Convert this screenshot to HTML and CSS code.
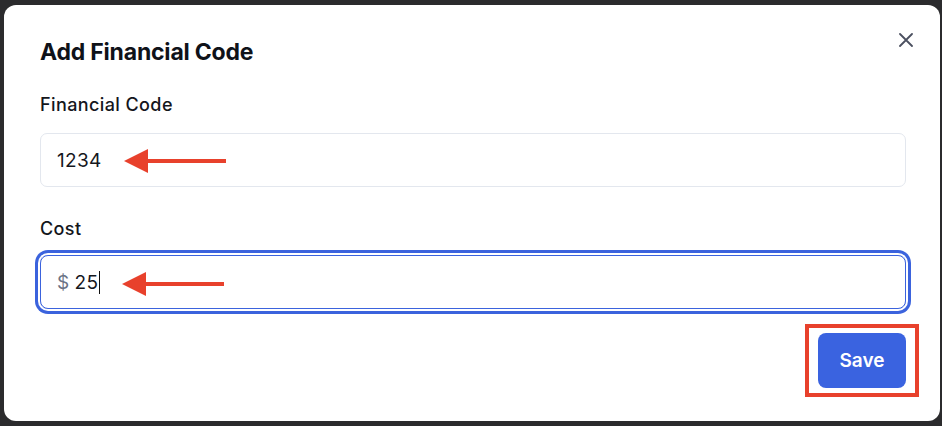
FILE: index.html
```html
<!DOCTYPE html>
<html lang="en">
<head>
<meta charset="utf-8">
<title>Add Financial Code</title>
<link rel="stylesheet" href="styles.css">
</head>
<body>
<div class="modal">
  <div class="header">
    <h2 class="title">Add Financial Code</h2>
    <button class="close" aria-label="Close">
      <svg width="14" height="14" viewBox="0 0 14 14"><path d="M1 1 L13 13 M13 1 L1 13" stroke="#4b5060" stroke-width="1.8" stroke-linecap="round" fill="none"/></svg>
    </button>
  </div>
  <label class="label label-first">Financial Code</label>
  <div class="input">
    <span class="value">1234</span>
    <svg class="arrow arrow-1" width="104" height="26" viewBox="0 0 104 26"><polygon points="0,13 24,1 24,25" fill="#e8412c"/><line x1="20" y1="13" x2="102" y2="13" stroke="#e8412c" stroke-width="4"/></svg>
  </div>
  <label class="label label-second">Cost</label>
  <div class="input input-focus">
    <span class="prefix">$</span><span class="value">25</span><span class="caret"></span>
    <svg class="arrow arrow-2" width="104" height="26" viewBox="0 0 104 26"><polygon points="0,13 24,1 24,25" fill="#e8412c"/><line x1="20" y1="13" x2="102" y2="13" stroke="#e8412c" stroke-width="4"/></svg>
  </div>
  <div class="footer">
    <button class="save">Save<span class="highlight"></span></button>
  </div>
</div>
</body>
</html>
```
FILE: styles.css
```css
html, body {
  margin: 0;
  padding: 0;
  background: #2b2b2d;
}
body {
  font-family: Inter, "Liberation Sans", Arial, sans-serif;
  color: #111318;
  width: 942px;
  height: 426px;
  overflow: hidden;
}
.modal {
  box-sizing: border-box;
  margin: 5px 2px 5px 4px;
  height: 416px;
  background: #fff;
  border-radius: 12px;
  padding: 33px 34px 0 36px;
  display: flex;
  flex-direction: column;
}
.header {
  display: flex;
  justify-content: space-between;
  align-items: flex-start;
  height: 28px;
}
.title {
  margin: 0;
  font-size: 23px;
  line-height: 28px;
  font-weight: 700;
  letter-spacing: -0.2px;
  color: #0f1219;
}
.close {
  border: 0;
  background: none;
  padding: 0;
  margin: -5px -7px 0 0;
  width: 14px;
  height: 14px;
  display: flex;
}
.label {
  display: block;
  font-size: 18px;
  line-height: 24px;
  font-weight: 500;
  letter-spacing: 0.4px;
  color: #14161c;
}
.label-first { margin-top: 27px; }
.label-second { margin-top: 30px; }
.input {
  position: relative;
  box-sizing: border-box;
  height: 54px;
  margin-top: 16px;
  border: 1px solid #e3e7ee;
  border-radius: 7px;
  padding: 0 16px;
  display: flex;
  align-items: center;
  font-size: 19px;
  letter-spacing: 0.3px;
  color: #15171d;
}
.input-focus {
  margin-top: 14px;
  border-color: #3b63dd;
  box-shadow: 0 0 0 2px #fff, 0 0 0 5px #3b63dd;
  border-radius: 8px;
}
.prefix {
  color: #6b7385;
  margin-right: 5px;
}
.caret {
  display: inline-block;
  width: 1px;
  height: 23px;
  background: #111;
  margin-left: 1px;
}
.arrow {
  position: absolute;
}
.arrow-1 { left: 83px; top: 14px; }
.arrow-2 { left: 81px; top: 15px; }
.footer {
  display: flex;
  justify-content: flex-end;
  margin-top: 24px;
}
.save {
  position: relative;
  width: 88px;
  height: 55px;
  border: 0;
  border-radius: 8px;
  background: #3a63e0;
  color: #fff;
  font-family: Inter, "Liberation Sans", Arial, sans-serif;
  font-size: 19px;
  font-weight: 600;
}
.highlight {
  position: absolute;
  left: -13px;
  right: -13px;
  top: -9px;
  bottom: -9px;
  border: 4px solid #e8412c;
}
```
